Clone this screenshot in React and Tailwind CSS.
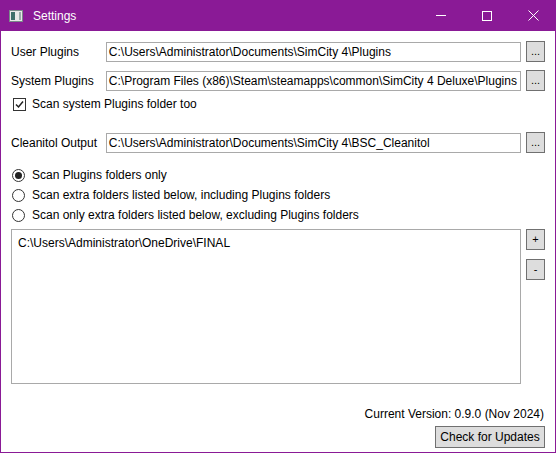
export default function App() {
  const tb = "h-[20px] border border-[#a9a9a9] bg-white px-[2px] flex items-center leading-none whitespace-nowrap overflow-hidden";
  const btn = "w-[19px] h-[21px] border border-[#707070] bg-[#dddddd] flex items-center justify-center text-[11px] leading-none";
  return (
    <div className="w-[556px] h-[453px] flex flex-col bg-white text-[12px] text-black" style={{ fontFamily: '"Liberation Sans", Arial, sans-serif' }}>
      <div className="h-[31px] bg-[#8a1a96] flex items-center text-white shrink-0">
        <svg width="14" height="12" className="ml-[9px]" viewBox="0 0 14 12">
          <rect x="0.5" y="0.5" width="13" height="11" fill="#e8e8e8" stroke="#7a8a8a" />
          <rect x="2" y="2" width="4" height="8" fill="#3e6e6a" />
          <rect x="10" y="2" width="2" height="8" fill="#9aa" />
        </svg>
        <span className="ml-[10px] text-[12px]">Settings</span>
        <div className="ml-auto flex items-center">
          <div className="w-[46px] h-[31px] flex items-center justify-center"><div className="w-[10px] h-px bg-white" /></div>
          <div className="w-[46px] h-[31px] flex items-center justify-center"><div className="w-[10px] h-[10px] border border-white" /></div>
          <div className="w-[46px] h-[31px] flex items-center justify-center">
            <svg width="11" height="11" viewBox="0 0 11 11"><path d="M0.5 0.5L10.5 10.5M10.5 0.5L0.5 10.5" stroke="white" strokeWidth="1" /></svg>
          </div>
        </div>
      </div>
      <div className="flex-1 border-x border-b border-[#8a1a96] flex flex-col pl-[10px] pr-[10px]">
        <div className="flex items-center mt-[10px]">
          <span className="w-[95px]">User Plugins</span>
          <div className={tb + " w-[416px]"}>C:\Users\Administrator\Documents\SimCity 4\Plugins</div>
          <div className={btn + " ml-[5px]"}>...</div>
        </div>
        <div className="flex items-center mt-[8px]">
          <span className="w-[95px]">System Plugins</span>
          <div className={tb + " w-[416px]"}>C:\Program Files (x86)\Steam\steamapps\common\SimCity 4 Deluxe\Plugins</div>
          <div className={btn + " ml-[5px]"}>...</div>
        </div>
        <div className="flex items-center mt-[4px] ml-[2px]">
          <div className="w-[13px] h-[13px] border border-[#333] flex items-center justify-center">
            <svg width="9" height="9" viewBox="0 0 9 9"><path d="M1 4.5L3.5 7L8 1.5" fill="none" stroke="#222" strokeWidth="1.5" /></svg>
          </div>
          <span className="ml-[6px]">Scan system Plugins folder too</span>
        </div>
        <div className="flex items-center mt-[19px]">
          <span className="w-[95px]">Cleanitol Output</span>
          <div className={tb + " w-[416px]"}>C:\Users\Administrator\Documents\SimCity 4\BSC_Cleanitol</div>
          <div className={btn + " ml-[5px]"}>...</div>
        </div>
        <div className="flex flex-col mt-[14px] gap-[4px] ml-[1px]">
          {["Scan Plugins folders only", "Scan extra folders listed below, including Plugins folders", "Scan only extra folders listed below, excluding Plugins folders"].map((t, i) => (
            <div key={i} className="flex items-center h-[16px]">
              <div className="w-[13px] h-[13px] rounded-full border border-[#333] flex items-center justify-center">
                {i === 0 && <div className="w-[7px] h-[7px] rounded-full bg-[#222]" />}
              </div>
              <span className="ml-[7px]">{t}</span>
            </div>
          ))}
        </div>
        <div className="flex mt-[6px]">
          <div className="w-[511px] h-[155px] border border-[#a9a9a9] px-[6px] pt-[4px]">C:\Users\Administrator\OneDrive\FINAL</div>
          <div className="flex flex-col ml-[5px]">
            <div className={btn}>+</div>
            <div className={btn + " mt-[9px]"}>-</div>
          </div>
        </div>
        <div className="mt-[21px] text-right pr-[1px]">Current Version: 0.9.0 (Nov 2024)</div>
        <div className="flex justify-end mt-[3px]">
          <div className="w-[110px] h-[22px] border border-[#707070] bg-[#dddddd] flex items-center justify-center">Check for Updates</div>
        </div>
      </div>
    </div>
  );
}
